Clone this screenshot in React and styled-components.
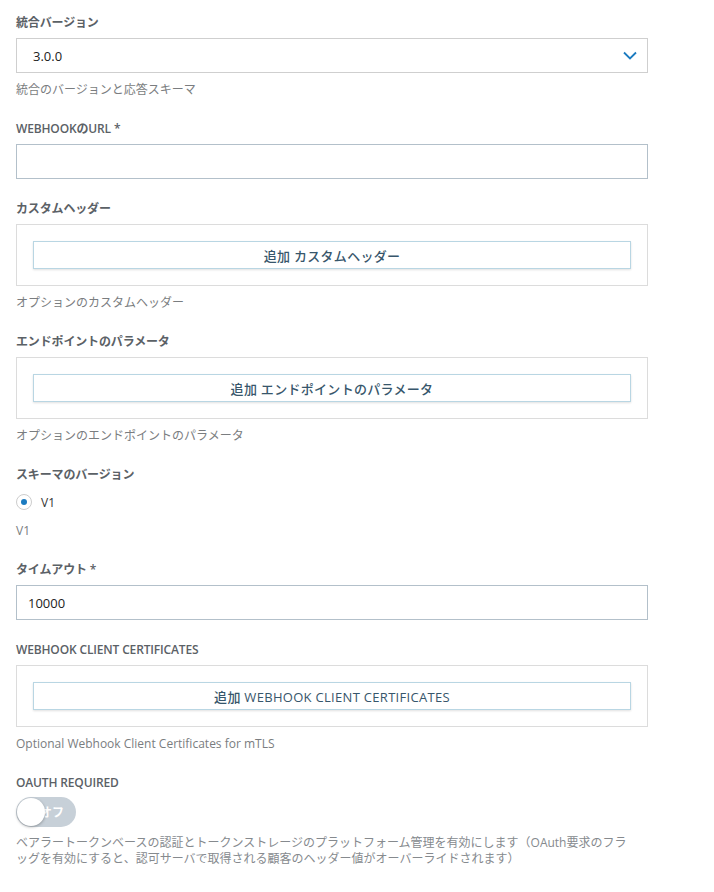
import React from "react";
import styled, { createGlobalStyle } from "styled-components";

const GlobalStyle = createGlobalStyle`
  body {
    margin: 0;
    background: #fff;
    font-family: "Open Sans", "Noto Sans CJK JP", sans-serif;
  }
`;

const App = () => {
  return (
    <Page>
      <GlobalStyle />
      <Field>
        <Label>統合バージョン</Label>
        <Select>
          <span>3.0.0</span>
          <svg width="14" height="9" viewBox="0 0 14 9">
            <path d="M1 1.5l6 6 6-6" fill="none" stroke="#1b7bc0" strokeWidth="1.8" />
          </svg>
        </Select>
        <Help>統合のバージョンと応答スキーマ</Help>
      </Field>

      <Field>
        <Label>WEBHOOKのURL *</Label>
        <Input />
      </Field>

      <Field>
        <Label>カスタムヘッダー</Label>
        <Panel>
          <AddButton>追加 カスタムヘッダー</AddButton>
        </Panel>
        <Help>オプションのカスタムヘッダー</Help>
      </Field>

      <Field>
        <Label>エンドポイントのパラメータ</Label>
        <Panel>
          <AddButton>追加 エンドポイントのパラメータ</AddButton>
        </Panel>
        <Help>オプションのエンドポイントのパラメータ</Help>
      </Field>

      <Field>
        <Label>スキーマのバージョン</Label>
        <RadioRow>
          <Radio />
          <span>V1</span>
        </RadioRow>
        <Help>V1</Help>
      </Field>

      <Field>
        <Label>タイムアウト *</Label>
        <Input>10000</Input>
      </Field>

      <Field>
        <Label>WEBHOOK CLIENT CERTIFICATES</Label>
        <Panel>
          <AddButton>追加 WEBHOOK CLIENT CERTIFICATES</AddButton>
        </Panel>
        <Help>Optional Webhook Client Certificates for mTLS</Help>
      </Field>

      <Field>
        <Label>OAUTH REQUIRED</Label>
        <Toggle>
          <ToggleText>オフ</ToggleText>
          <Knob />
        </Toggle>
        <Help $long>
          ベアラートークンベースの認証とトークンストレージのプラットフォーム管理を有効にします（OAuth要求のフラッグを有効にすると、認可サーバで取得される顧客のヘッダー値がオーバーライドされます）
        </Help>
      </Field>
    </Page>
  );
};

export default App;

const Page = styled.div`
  width: 632px;
  padding: 15px 16px 20px;
`;

const Field = styled.div`
  display: flex;
  flex-direction: column;
  margin-bottom: 22px;
`;

const Label = styled.div`
  font-size: 12px;
  line-height: 16px;
  font-weight: 600;
  letter-spacing: -0.15px;
  color: #5b6166;
  margin-bottom: 7px;
`;

const Select = styled.div`
  height: 35px;
  box-sizing: border-box;
  border: 1px solid #cfcfcf;
  display: flex;
  align-items: center;
  justify-content: space-between;
  padding: 0 10px 0 16px;
  font-size: 13px;
  color: #222;
  svg {
    display: block;
  }
`;

const Input = styled.div`
  height: 35px;
  box-sizing: border-box;
  border: 1px solid #b3c0ca;
  display: flex;
  align-items: center;
  padding: 0 11px;
  font-size: 13px;
  color: #222;
`;

const Help = styled.div`
  margin-top: 8px;
  padding-right: ${(p) => (p.$long ? "18px" : "0")};
  font-size: 12px;
  line-height: ${(p) => (p.$long ? "16px" : "18px")};
  color: ${(p) => (p.$long ? "#868a8e" : "#7a7d80")};
`;

const Panel = styled.div`
  border: 1px solid #dcdcdc;
  padding: 16px;
`;

const AddButton = styled.div`
  height: 28px;
  box-sizing: border-box;
  border: 1px solid #b9d6e3;
  box-shadow: 0 1px 2px rgba(0, 0, 0, 0.12);
  display: flex;
  align-items: center;
  justify-content: center;
  font-size: 13px;
  font-weight: 500;
  color: #37566b;
  letter-spacing: 0.3px;
`;

const RadioRow = styled.div`
  display: flex;
  align-items: center;
  gap: 9px;
  height: 24px;
  font-size: 12px;
  color: #333;
`;

const Radio = styled.span`
  width: 16px;
  height: 16px;
  box-sizing: border-box;
  border: 1px solid #cdcdcd;
  border-radius: 50%;
  display: flex;
  align-items: center;
  justify-content: center;
  &::after {
    content: "";
    width: 6px;
    height: 6px;
    border-radius: 50%;
    background: #1b7bc0;
  }
`;

const Toggle = styled.div`
  position: relative;
  width: 60px;
  height: 30px;
  border-radius: 15px;
  background: #c7d0d8;
  margin-top: -1px;
`;

const ToggleText = styled.span`
  position: absolute;
  left: 24px;
  top: 6px;
  font-size: 12px;
  font-weight: 700;
  color: #fff;
`;

const Knob = styled.span`
  position: absolute;
  left: 1px;
  top: 1px;
  width: 28px;
  height: 28px;
  border-radius: 50%;
  background: #fff;
  box-shadow: 0 1px 3px rgba(0, 0, 0, 0.3);
`;
